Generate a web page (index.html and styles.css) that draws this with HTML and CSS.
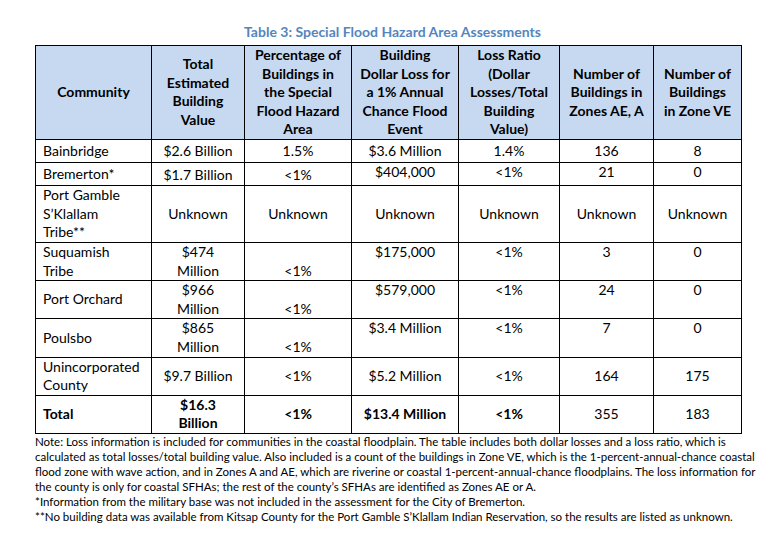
FILE: index.html
```html
<!DOCTYPE html>
<html>
<head>
<meta charset="utf-8">
<link rel="stylesheet" href="styles.css">
</head>
<body>
<div class="page">
  <h1 class="title">Table 3: Special Flood Hazard Area Assessments</h1>
  <table class="flood">
    <colgroup>
      <col class="c1"><col class="c2"><col class="c3"><col class="c4"><col class="c5"><col class="c6"><col class="c7">
    </colgroup>
    <thead>
      <tr class="hrow">
        <th>Community</th>
        <th>Total<br>Estimated<br>Building<br>Value</th>
        <th>Percentage of<br>Buildings in<br>the Special<br>Flood Hazard<br>Area</th>
        <th>Building<br>Dollar Loss for<br>a 1% Annual<br>Chance Flood<br>Event</th>
        <th>Loss Ratio<br>(Dollar<br>Losses/Total<br>Building<br>Value)</th>
        <th>Number of<br>Buildings in<br>Zones AE, A</th>
        <th>Number of<br>Buildings<br>in Zone VE</th>
      </tr>
    </thead>
    <tbody>
      <tr class="r1">
        <td class="name">Bainbridge</td>
        <td>$2.6 Billion</td>
        <td>1.5%</td>
        <td>$3.6 Million</td>
        <td>1.4%</td>
        <td>136</td>
        <td>8</td>
      </tr>
      <tr class="r1b">
        <td class="name">Bremerton*</td>
        <td class="bot">$1.7 Billion</td>
        <td class="bot">&lt;1%</td>
        <td class="top">$404,000</td>
        <td class="top">&lt;1%</td>
        <td class="top">21</td>
        <td class="top">0</td>
      </tr>
      <tr class="r3">
        <td class="name">Port Gamble<br>S’Klallam<br>Tribe**</td>
        <td>Unknown</td>
        <td>Unknown</td>
        <td>Unknown</td>
        <td>Unknown</td>
        <td>Unknown</td>
        <td>Unknown</td>
      </tr>
      <tr class="r2">
        <td class="name top">Suquamish<br>Tribe</td>
        <td class="top">$474<br>Million</td>
        <td class="bot">&lt;1%</td>
        <td class="top">$175,000</td>
        <td class="top">&lt;1%</td>
        <td class="top">3</td>
        <td class="top">0</td>
      </tr>
      <tr class="r2">
        <td class="name">Port Orchard</td>
        <td class="top">$966<br>Million</td>
        <td class="bot">&lt;1%</td>
        <td class="top">$579,000</td>
        <td class="top">&lt;1%</td>
        <td class="top">24</td>
        <td class="top">0</td>
      </tr>
      <tr class="r2">
        <td class="name">Poulsbo</td>
        <td class="top">$865<br>Million</td>
        <td class="bot">&lt;1%</td>
        <td class="top">$3.4 Million</td>
        <td class="top">&lt;1%</td>
        <td class="top">7</td>
        <td class="top">0</td>
      </tr>
      <tr class="r2">
        <td class="name">Unincorporated<br>County</td>
        <td>$9.7 Billion</td>
        <td>&lt;1%</td>
        <td>$5.2 Million</td>
        <td>&lt;1%</td>
        <td>164</td>
        <td>175</td>
      </tr>
      <tr class="r2 total">
        <td class="name b">Total</td>
        <td class="b">$16.3<br>Billion</td>
        <td class="b">&lt;1%</td>
        <td class="b">$13.4 Million</td>
        <td class="b">&lt;1%</td>
        <td>355</td>
        <td>183</td>
      </tr>
    </tbody>
  </table>
  <p class="note">Note: Loss information is included for communities in the coastal floodplain. The table includes both dollar losses and a loss ratio, which is<br>calculated as total losses/total building value. Also included is a count of the buildings in Zone VE, which is the 1-percent-annual-chance coastal<br>flood zone with wave action, and in Zones A and AE, which are riverine or coastal 1-percent-annual-chance floodplains. The loss information for<br>the county is only for coastal SFHAs; the rest of the county’s SFHAs are identified as Zones AE or A.<br>*Information from the military base was not included in the assessment for the City of Bremerton.<br>**No building data was available from Kitsap County for the Port Gamble S’Klallam Indian Reservation, so the results are listed as unknown.</p>
</div>
</body>
</html>
```

FILE: styles.css
```css
html, body {
  margin: 0;
  padding: 0;
  background: #ffffff;
}
body {
  font-family: Lato, "Open Sans", "DejaVu Sans", sans-serif;
  color: #000000;
}
.page {
  padding: 24px 0 0 35px;
  width: 706px;
}
.title {
  margin: 0 0 5px 0;
  font-size: 14px;
  line-height: 16px;
  font-weight: bold;
  color: #5585bd;
  text-align: center;
  padding-left: 9px;
}
.flood {
  border-collapse: collapse;
  table-layout: fixed;
  width: 706px;
  font-size: 14px;
  line-height: 18.6px;
}
.c1 { width: 116px; }
.c2 { width: 93px; }
.c3 { width: 107px; }
.c4 { width: 107px; }
.c5 { width: 101px; }
.c6 { width: 94px; }
.c7 { width: 88px; }
.flood th, .flood td {
  border: 1px solid #000000;
  padding: 0 2px;
  text-align: center;
  vertical-align: middle;
  overflow: hidden;
  white-space: nowrap;
}
.flood th {
  background: #c6d9f1;
  font-weight: bold;
}
.hrow { height: 93.5px; }
.r1 { height: 23px; }
.r1b { height: 23px; }
.r3 { height: 57px; }
.r2 { height: 37.5px; }
.flood td.name {
  text-align: left;
  padding-left: 7px;
}
.flood td.top {
  vertical-align: top;
  padding-top: 0;
}
.flood td.bot {
  vertical-align: bottom;
}
.flood td.b {
  font-weight: bold;
}
.note {
  margin: 0;
  padding-top: 0;
  font-size: 11.5px;
  line-height: 15px;
  white-space: nowrap;
}
```
